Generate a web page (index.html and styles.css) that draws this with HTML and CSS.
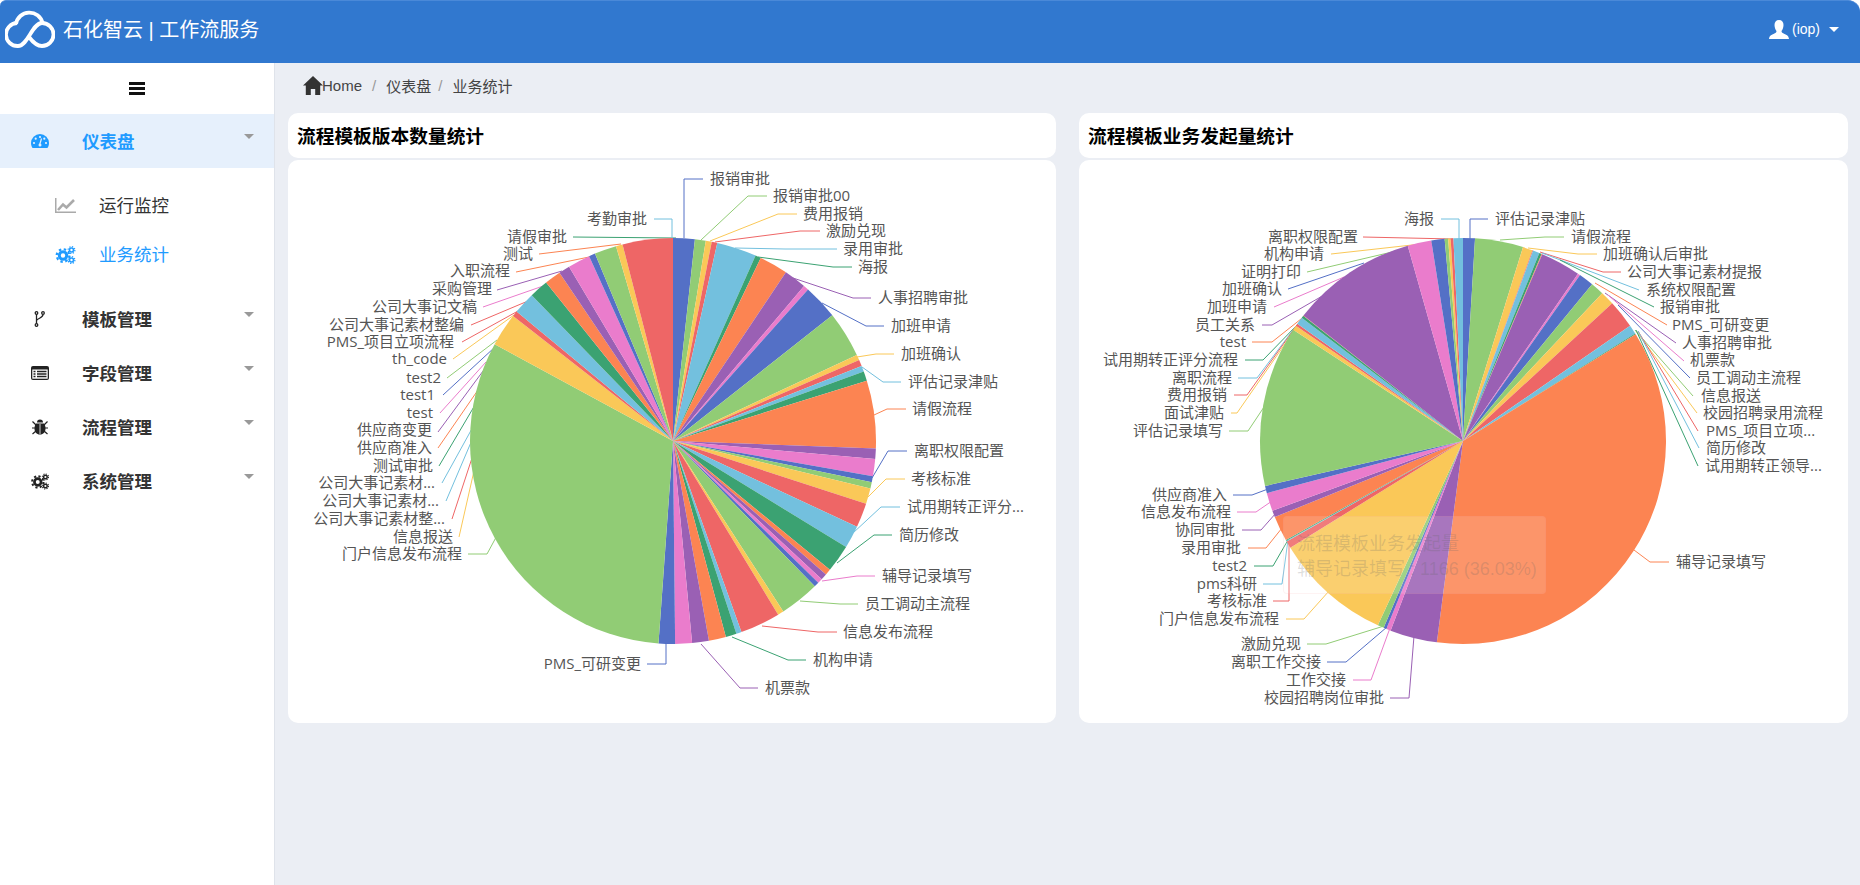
FILE: index.html
```html
<!DOCTYPE html>
<html lang="zh-CN">
<head>
    <meta charset="UTF-8">
    <meta name="viewport" content="width=device-width, initial-scale=1.0">
    <title>石化智云 | 工作流服务</title>
    <link rel="stylesheet" href="styles.css">
</head>
<body>

    <svg class="icon-defs" width="0" height="0">
        <symbol id="i-cogs" viewBox="0 0 20 18">
            <circle cx="7.5" cy="9.5" r="3.7" fill="none" stroke="currentColor" stroke-width="3"/>
            <circle cx="7.5" cy="9.5" r="6.3" fill="none" stroke="currentColor" stroke-width="2.2" stroke-dasharray="2.4 2.55"/>
            <circle cx="16" cy="4" r="2" fill="none" stroke="currentColor" stroke-width="1.6"/>
            <circle cx="16" cy="4" r="3.4" fill="none" stroke="currentColor" stroke-width="1.2" stroke-dasharray="1.3 1.37"/>
            <circle cx="16" cy="14" r="2" fill="none" stroke="currentColor" stroke-width="1.6"/>
            <circle cx="16" cy="14" r="3.4" fill="none" stroke="currentColor" stroke-width="1.2" stroke-dasharray="1.3 1.37"/>
        </symbol>
    </svg>

    <header class="topbar">
        <div class="brand">
            <svg class="logo" viewBox="5 8 50 40" width="50" height="40">
                <path d="M17 22A11.500 11.500 0 1 0 18 45C28 45 32 22 42 22A11.500 11.500 0 1 1 42 45C36 45 32 40 29 36" fill="none" stroke="#fff" stroke-width="3.800"/>
                <path d="M16 23A13.500 13.500 0 0 1 42.500 22" fill="none" stroke="#fff" stroke-width="3.800"/>
            </svg>
            <span class="brand-name">石化智云 | 工作流服务</span>
        </div>
        <div class="user">
            <svg viewBox="0 0 20 19" width="20" height="19">
                <path d="M10 0c3 0 4.500 2 4.500 5 0 2.500-1 5-2 6 0 1.500 1 2 3 3 2 .8 4 1.500 4.500 5H0c.5-3.500 2.500-4.200 4.500-5 2-1 3-1.500 3-3-1-1-2-3.500-2-6 0-3 1.500-5 4.500-5z" fill="#fff"/>
            </svg>
            <span>(iop)</span>
            <i class="caret caret-white"></i>
        </div>
    </header>

    <div class="layout">
        <aside class="sidebar">
            <div class="toggle">
                <svg viewBox="0 0 16 13" width="16" height="13">
                    <path d="M0 0h16v3H0zM0 5h16v3H0zM0 10h16v3H0z" fill="#111"/>
                </svg>
            </div>

            <a class="menu-item active">
                <svg class="menu-icon" viewBox="0 0 18 14" width="18" height="14">
                    <path d="M9 0a9 9 0 0 0-9 9c0 2 .6 3.700 1.600 5h14.800c1-1.300 1.600-3 1.600-5a9 9 0 0 0-9-9z" fill="currentColor"/>
                    <g fill="#e6f0fc">
                        <circle cx="9" cy="3" r="1.100"/>
                        <circle cx="4.700" cy="4.700" r="1.100"/>
                        <circle cx="13.300" cy="4.700" r="1.100"/>
                        <circle cx="3" cy="9" r="1.100"/>
                        <circle cx="15" cy="9" r="1.100"/>
                        <circle cx="9" cy="11" r="1.500"/>
                    </g>
                    <path d="M8.600 11L10.500 4.500" stroke="#e6f0fc" stroke-width="1.200"/>
                </svg>
                <span>仪表盘</span>
                <i class="caret"></i>
            </a>
            <div class="submenu">
                <a class="sub-item">
                    <svg class="sub-icon" viewBox="0 0 21 15" width="21" height="15">
                        <path d="M.7 0v14.300H21" fill="none" stroke="#aaa" stroke-width="1.600"/>
                        <path d="M3 12l5-5.500 3.500 3L19 2" fill="none" stroke="#aaa" stroke-width="2.600"/>
                    </svg>
                    <span>运行监控</span>
                </a>
                <a class="sub-item current">
                    <svg class="sub-icon" width="20" height="18"><use href="#i-cogs"/></svg>
                    <span>业务统计</span>
                </a>
            </div>

            <a class="menu-item">
                <svg class="menu-icon" viewBox="0 0 18 16" width="18" height="16">
                    <g fill="none" stroke="#222" stroke-width="1.300">
                        <circle cx="5.500" cy="2" r="1.300"/>
                        <circle cx="12" cy="2" r="1.300"/>
                        <circle cx="5.500" cy="14" r="1.300"/>
                        <path d="M5.500 3.500v9M12 3.500c0 3.500-5 3.500-6.500 6"/>
                    </g>
                </svg>
                <span>模板管理</span>
                <i class="caret"></i>
            </a>
            <a class="menu-item">
                <svg class="menu-icon" viewBox="0 0 18 14" width="18" height="14">
                    <rect width="18" height="14" rx="2" fill="#222"/>
                    <rect x="1.300" y="3.500" width="15.400" height="9.200" fill="#fff"/>
                    <path d="M2.500 5.500h2M6 5.500h9.500M2.500 8h2M6 8h9.500M2.500 10.500h2M6 10.500h9.500" stroke="#222" stroke-width="1.300"/>
                </svg>
                <span>字段管理</span>
                <i class="caret"></i>
            </a>
            <a class="menu-item">
                <svg class="menu-icon" viewBox="0 0 18 16" width="18" height="16">
                    <path d="M6 3.500a3 3 0 0 1 6 0zM5 4.500h8c1 1 1.500 3 1.500 5 0 3.500-2 6-5.500 6s-5.500-2.500-5.500-6c0-2 .5-4 1.500-5z" fill="#222"/>
                    <path d="M1.500 2.500L5 6M16.500 2.500L13 6M1 9h3M14 9h3M1.500 15L5 12M16.500 15L13 12" stroke="#222" stroke-width="1.200" fill="none"/>
                    <path d="M9 5v10" stroke="#fff" stroke-width=".8"/>
                </svg>
                <span>流程管理</span>
                <i class="caret"></i>
            </a>
            <a class="menu-item">
                <svg class="menu-icon dark" width="18" height="17"><use href="#i-cogs"/></svg>
                <span>系统管理</span>
                <i class="caret"></i>
            </a>
        </aside>

        <main class="content">
            <nav class="breadcrumb">
                <svg viewBox="0 0 20 19" width="20" height="19">
                    <path d="M10 0l10 9.500h-2.800V19h-5v-6H7.800v6h-5V9.500H0z" fill="#333"/>
                </svg>
                <span class="home">Home</span>
                <em>/</em>
                <span>仪表盘</span>
                <em class="tight">/</em>
                <span>业务统计</span>
            </nav>

            <div class="panels">
                <section class="panel">
                    <div class="panel-head"><h3>流程模板版本数量统计</h3></div>
                    <div class="panel-body" id="versionChart"></div>
                </section>
                <section class="panel">
                    <div class="panel-head"><h3>流程模板业务发起量统计</h3></div>
                    <div class="panel-body" id="startChart">
                        <div class="tooltip">
                            <div>流程模板业务发起量</div>
                            <div>辅导记录填写 : 1166 (36.03%)</div>
                        </div>
                    </div>
                </section>
            </div>
        </main>
    </div>

    <script src="chart.js"></script>
</body>
</html>
```

FILE: styles.css
```css
* {
    box-sizing: border-box;
}
html {
    background-color: #fff;
}
body {
    font-family: "Liberation Sans", "Noto Sans CJK SC", sans-serif;
    margin: 0;
    height: 885px;
    overflow: hidden;
    color: #333;
}
.icon-defs {
    position: absolute;
}

/* top bar */
.topbar {
    height: 63px;
    background-color: #3178cf;
    border-top: 1px solid #4a89d8;
    border-radius: 6px 12px 0 0;
    display: flex;
    justify-content: space-between;
    align-items: center;
    padding: 0 21px 6px 5px;
    color: #fff;
}
.brand {
    display: flex;
    align-items: center;
    gap: 8px;
}
.brand-name {
    font-size: 20px;
    margin-bottom: 2px;
}
.user {
    display: flex;
    align-items: center;
    gap: 3px;
    font-size: 14px;
}
.caret {
    width: 0;
    height: 0;
    margin-left: auto;
    border-left: 5px solid transparent;
    border-right: 5px solid transparent;
    border-top: 5px solid #999;
}
.caret-white {
    margin-left: 6px;
    border-top-color: #fff;
}

/* side menu */
.layout {
    display: flex;
    height: 822px;
}
.sidebar {
    width: 275px;
    flex: none;
    background-color: #fff;
    border-right: 1px solid #dfe3ea;
}
.toggle {
    height: 51px;
    display: flex;
    justify-content: center;
    align-items: center;
}
.menu-item {
    height: 54px;
    display: flex;
    align-items: center;
    padding: 0 20px 0 31px;
    font-size: 17.500px;
    font-weight: bold;
    color: #333;
}
.menu-item span,
.sub-item span {
    margin-bottom: 2px;
}
.menu-item .caret {
    margin-bottom: 10px;
}
.menu-icon {
    width: 18px;
    margin-right: 33px;
    flex: none;
}
.menu-icon.dark {
    color: #222;
}
.menu-item.active {
    background-color: #e6f0fc;
    color: #1f9bff;
}
.submenu {
    padding: 13px 0;
}
.sub-item {
    height: 49px;
    display: flex;
    align-items: center;
    padding-left: 55px;
    font-size: 17.500px;
    color: #333;
}
.sub-item.current {
    color: #1f9bff;
}
.sub-icon {
    width: 21px;
    margin-right: 23px;
    flex: none;
}

/* main area */
.content {
    flex: 1;
    background-color: #ebeef4;
    padding: 0 12px 0 13px;
}
.breadcrumb {
    height: 50px;
    display: flex;
    align-items: center;
    padding: 0 0 5px 15px;
    font-size: 15px;
    color: #444;
}
.breadcrumb .home {
    margin-left: -1px;
}
.breadcrumb em {
    font-style: normal;
    color: #999;
    margin: 0 10px;
}
.breadcrumb em.tight {
    margin: 0 10px 0 7px;
}
.panels {
    display: grid;
    grid-template-columns: 768px 769px;
    gap: 23px;
}
.panel-head {
    height: 45px;
    background-color: #fff;
    border-radius: 10px;
    display: flex;
    align-items: center;
    padding-left: 9px;
}
.panel-head h3 {
    margin: 0 0 2px;
    font-size: 18.720px;
    color: #000;
}
.panel-body {
    position: relative;
    height: 563px;
    margin-top: 2px;
    background-color: #fff;
    border-radius: 10px;
}
.panel-body svg {
    display: block;
}
.chart-label {
    font-family: "Open Sans", "Noto Sans CJK SC", sans-serif;
    font-size: 15px;
    fill: #555;
    dominant-baseline: central;
}
.tooltip {
    position: absolute;
    left: 204px;
    top: 356px;
    width: 263px;
    height: 78px;
    padding: 15px 13px;
    background-color: rgba(255, 255, 255, 0.14);
    border: 1px solid rgba(238, 102, 102, 0.08);
    border-radius: 4px;
    font-size: 18px;
    line-height: 25px;
    white-space: nowrap;
    color: rgba(102, 102, 102, 0.22);
}
```

FILE: chart.js
```js
// colours repeat in this order, same as the chart library default
const palette = ['#5470c6', '#91cc75', '#fac858', '#ee6666', '#73c0de', '#3ba272', '#fc8452', '#9a60b4', '#ea7ccc'];
const [BLUE, GREEN, YELLOW, RED, SKY, TEAL, ORANGE, PURPLE, PINK] = palette;
const SVG_NS = 'http://www.w3.org/2000/svg';

// slice end angles in degrees, clockwise from 12 o'clock
// labels: [text, anchor x, y, colour, line points]. Points are page coordinates.
const versionChart = {
    cx: 673, cy: 441, r: 203,
    box: [288, 160, 768, 563],
    ends: [6.2, 9.3, 11, 12.6, 24, 25.6, 33.8, 40.2, 41.7, 51.7, 64.9, 66.5, 68.3, 70, 72.7, 92.1, 95.1, 100, 101.7,
        103.5, 108, 115, 121.5, 129.4, 131.1, 132.9, 134.3, 135.7, 147.1, 148.8, 160.3, 161.8, 164.9, 169.8, 174.6,
        179.4, 184.1, 298.5, 308, 309.6, 315.9, 321.3, 326, 329.2, 335.6, 337.4, 343.7, 345.6, 360],
    right: [
        ['报销审批', 710, 178, BLUE, [684, 238, 684, 179, 703, 179]],
        ['报销审批00', 773, 195, GREEN, [701, 240, 748, 196, 767, 196]],
        ['费用报销', 803, 213, YELLOW, [710, 241, 778, 214, 797, 214]],
        ['激励兑现', 826, 230, RED, [715, 242, 800, 231, 820, 231]],
        ['录用审批', 843, 248, SKY, [735, 248, 785, 249, 837, 249]],
        ['海报', 858, 266, TEAL, [758, 257, 833, 267, 852, 267]],
        ['人事招聘审批', 878, 297, PURPLE, [793, 278, 853, 298, 871, 298]],
        ['加班申请', 891, 325, BLUE, [822, 303, 866, 326, 884, 326]],
        ['加班确认', 901, 353, YELLOW, [857, 357, 876, 354, 894, 354]],
        ['评估记录津贴', 908, 381, SKY, [862, 367, 883, 382, 901, 382]],
        ['请假流程', 912, 408, ORANGE, [874, 415, 887, 409, 906, 409]],
        ['离职权限配置', 914, 450, BLUE, [872, 478, 888, 451, 907, 451]],
        ['考核标准', 911, 478, YELLOW, [868, 497, 886, 479, 905, 479]],
        ['试用期转正评分...', 907, 506, SKY, [853, 533, 881, 507, 900, 507]],
        ['简历修改', 899, 534, TEAL, [837, 563, 874, 535, 892, 535]],
        ['辅导记录填写', 882, 575, PINK, [822, 581, 857, 576, 875, 576]],
        ['员工调动主流程', 865, 603, GREEN, [800, 601, 840, 604, 858, 604]],
        ['信息发布流程', 843, 631, RED, [762, 626, 818, 632, 837, 632]],
        ['机构申请', 813, 659, TEAL, [732, 637, 788, 660, 806, 660]],
        ['机票款', 765, 687, PURPLE, [701, 644, 740, 688, 758, 688]]
    ],
    left: [
        ['PMS_可研变更', 641, 663, BLUE, [666, 640, 666, 664, 647, 664]],
        ['门户信息发布流程', 462, 553, GREEN, [500, 530, 487, 554, 468, 554]],
        ['信息报送', 453, 536, YELLOW, [459, 537, 476, 462]],
        ['公司大事记素材整...', 445, 518, RED, [452, 519, 472, 458]],
        ['公司大事记素材...', 439, 500, SKY, [446, 501, 472, 440]],
        ['公司大事记素材...', 435, 482, SKY, [442, 483, 474, 425]],
        ['测试审批', 433, 465, TEAL, [439, 466, 475, 405]],
        ['供应商准入', 432, 447, ORANGE, [438, 448, 478, 390]],
        ['供应商变更', 432, 429, PURPLE, [438, 432, 486, 367]],
        ['test', 433, 412, PINK, [440, 413, 486, 362]],
        ['test1', 435, 394, BLUE, [443, 395, 495, 347]],
        ['test2', 441, 377, GREEN, [447, 378, 497, 340]],
        ['th_code', 447, 358, YELLOW, [453, 359, 514, 315]],
        ['PMS_项目立项流程', 454, 341, RED, [462, 342, 518, 311]],
        ['公司大事记素材整编', 464, 324, RED, [471, 325, 528, 301]],
        ['公司大事记文稿', 477, 306, PINK, [483, 307, 546, 285]],
        ['采购管理', 492, 288, PURPLE, [497, 290, 562, 271]],
        ['入职流程', 510, 270, ORANGE, [516, 272, 594, 256]],
        ['测试', 533, 253, ORANGE, [539, 254, 621, 244]],
        ['请假审批', 567, 236, TEAL, [573, 237, 676, 238]],
        ['考勤审批', 647, 218, SKY, [654, 219, 672, 219, 672, 240]]
    ]
};

const startChart = {
    cx: 1463, cy: 441, r: 203,
    box: [1079, 160, 769, 563],
    ends: [3.4, 17.2, 20, 20.2, 22.1, 22.8, 23, 34.5, 35.2, 39.5, 43.3, 47.3, 55.4, 58, 58.3, 187.4, 200.9, 202.2, 203,
        204.8, 238.3, 240.3, 240.5, 240.8, 248, 249.9, 255.1, 257.2, 303.2, 304.6, 305.3, 307.4, 308.1, 308.2, 344.2,
        351, 354.8, 355.8, 356.5, 357.3, 360],
    right: [
        ['评估记录津贴', 1495, 218, BLUE, [1470, 240, 1470, 219, 1488, 219]],
        ['请假流程', 1571, 236, GREEN, [1500, 240, 1545, 237, 1564, 237]],
        ['加班确认后审批', 1603, 253, YELLOW, [1528, 248, 1578, 254, 1597, 254]],
        ['公司大事记素材提报', 1627, 271, RED, [1540, 252, 1603, 272, 1621, 272]],
        ['系统权限配置', 1646, 289, SKY, [1542, 253, 1639, 290]],
        ['报销审批', 1660, 306, TEAL, [1560, 260, 1654, 307]],
        ['PMS_可研变更', 1672, 324, ORANGE, [1595, 283, 1667, 325]],
        ['人事招聘审批', 1682, 342, PURPLE, [1605, 293, 1676, 343]],
        ['机票款', 1690, 359, PINK, [1608, 295, 1684, 361]],
        ['员工调动主流程', 1696, 377, BLUE, [1618, 305, 1690, 378]],
        ['信息报送', 1701, 395, GREEN, [1635, 330, 1693, 396]],
        ['校园招聘录用流程', 1703, 412, YELLOW, [1636, 331, 1697, 413]],
        ['PMS_项目立项...', 1706, 430, RED, [1638, 331, 1698, 431]],
        ['简历修改', 1706, 447, SKY, [1638, 331, 1699, 448]],
        ['试用期转正领导...', 1705, 465, TEAL, [1636, 330, 1698, 466]],
        ['辅导记录填写', 1676, 561, ORANGE, [1634, 550, 1650, 562, 1669, 562]]
    ],
    left: [
        ['海报', 1434, 218, SKY, [1459, 240, 1459, 219, 1441, 219]],
        ['离职权限配置', 1358, 236, RED, [1363, 237, 1453, 239]],
        ['机构申请', 1324, 253, YELLOW, [1331, 254, 1448, 241]],
        ['证明打印', 1301, 271, GREEN, [1307, 272, 1392, 252]],
        ['加班确认', 1282, 288, BLUE, [1288, 289, 1364, 263]],
        ['加班申请', 1267, 306, PINK, [1274, 307, 1344, 277]],
        ['员工关系', 1255, 324, PURPLE, [1262, 325, 1272, 325, 1324, 295]],
        ['test', 1246, 341, ORANGE, [1252, 342, 1272, 342, 1306, 315]],
        ['试用期转正评分流程', 1238, 359, TEAL, [1245, 360, 1263, 360, 1299, 323]],
        ['离职流程', 1232, 377, SKY, [1238, 378, 1257, 378, 1296, 326]],
        ['费用报销', 1227, 394, RED, [1234, 395, 1247, 395, 1297, 325]],
        ['面试津贴', 1224, 412, YELLOW, [1231, 413, 1237, 413, 1296, 328]],
        ['评估记录填写', 1223, 430, GREEN, [1229, 431, 1248, 431, 1266, 404]],
        ['供应商准入', 1227, 494, BLUE, [1233, 495, 1252, 495, 1268, 489]],
        ['信息发布流程', 1231, 511, PINK, [1237, 512, 1256, 512, 1272, 501]],
        ['协同审批', 1235, 529, PURPLE, [1242, 530, 1261, 530, 1276, 513]],
        ['录用审批', 1241, 547, ORANGE, [1248, 548, 1266, 548, 1282, 528]],
        ['test2', 1247, 565, TEAL, [1254, 566, 1273, 566, 1288, 540]],
        ['pms科研', 1257, 583, SKY, [1263, 584, 1282, 584, 1288, 540]],
        ['考核标准', 1267, 600, RED, [1273, 601, 1289, 601, 1289, 541]],
        ['门户信息发布流程', 1279, 618, YELLOW, [1286, 619, 1304, 619, 1329, 591]],
        ['激励兑现', 1301, 643, GREEN, [1307, 644, 1326, 644, 1384, 626]],
        ['离职工作交接', 1321, 661, BLUE, [1327, 662, 1346, 662, 1387, 627]],
        ['工作交接', 1346, 679, PINK, [1353, 680, 1371, 680, 1390, 628]],
        ['校园招聘岗位审批', 1384, 697, PURPLE, [1390, 698, 1409, 698, 1414, 636]]
    ]
};

function el(name, attrs) {
    const node = document.createElementNS(SVG_NS, name);
    Object.keys(attrs).forEach(key => node.setAttribute(key, attrs[key]));
    return node;
}

function polar(chart, deg) {
    const rad = deg * Math.PI / 180;
    return [chart.cx + chart.r * Math.sin(rad), chart.cy - chart.r * Math.cos(rad)];
}

function addLabels(svg, items, anchor, lineLayer) {
    items.forEach(([text, x, y, colour, points]) => {
        lineLayer.appendChild(el('polyline', {
            points: points.join(' '),
            fill: 'none',
            stroke: colour,
            'stroke-width': 1
        }));
        const label = el('text', { class: 'chart-label', x: x, y: y - 0.5, 'text-anchor': anchor });
        label.textContent = text;
        svg.appendChild(label);
    });
}

function drawPie(hostId, chart) {
    const host = document.getElementById(hostId);
    const svg = el('svg', {
        viewBox: chart.box.join(' '),
        width: chart.box[2],
        height: chart.box[3]
    });
    // label lines sit under the slices, so they vanish at the pie edge
    const lines = el('g', {});
    svg.appendChild(lines);

    let start = 0;
    chart.ends.forEach((end, i) => {
        const [x1, y1] = polar(chart, start);
        const [x2, y2] = polar(chart, end);
        const large = end - start > 180 ? 1 : 0;
        svg.appendChild(el('path', {
            d: `M${chart.cx} ${chart.cy}L${x1} ${y1}A${chart.r} ${chart.r} 0 ${large} 1 ${x2} ${y2}Z`,
            fill: palette[i % palette.length]
        }));
        start = end;
    });

    addLabels(svg, chart.right, 'start', lines);
    addLabels(svg, chart.left, 'end', lines);
    host.insertBefore(svg, host.firstChild);
}

drawPie('versionChart', versionChart);
drawPie('startChart', startChart);
```
